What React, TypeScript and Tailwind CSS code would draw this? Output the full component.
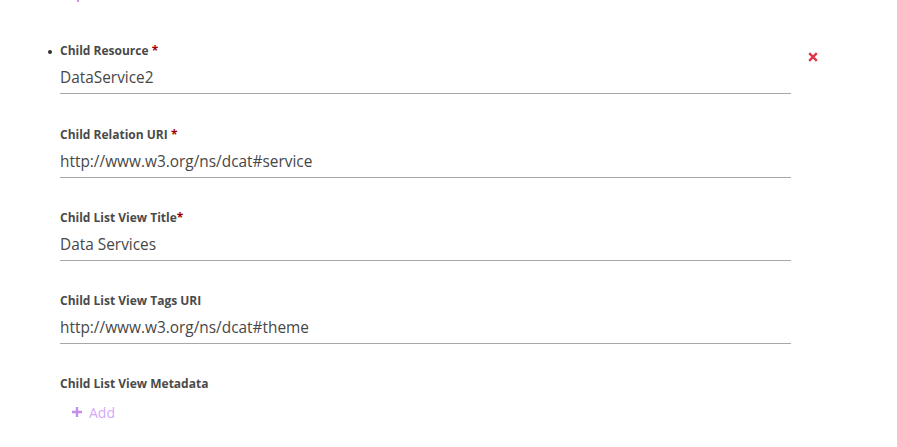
const fields = [
  { label: 'Child Relation URI', required: ' *', value: 'http://www.w3.org/ns/dcat#service', gap: 'mt-[33px]' },
  { label: 'Child List View Title', required: '*', value: 'Data Services', gap: 'mt-[32px]' },
  { label: 'Child List View Tags URI', required: '', value: 'http://www.w3.org/ns/dcat#theme', gap: 'mt-[32px]' },
];

function Field({ label, required, value, gap }: { label: string; required: string; value: string; gap: string }) {
  return (
    <div className={gap}>
      <label className="block text-[12px] leading-[16px] font-bold text-[#4a4a4a]">
        {label}
        {required && <span className="text-[#a00000]">{required}</span>}
      </label>
      <div className="mt-[7px] pb-[3px] border-b border-[#a8a8a8] text-[15.4px] leading-[24px] text-[#474747]">
        {value}
      </div>
    </div>
  );
}

function App() {
  return (
    <div className="w-[897px] h-[447px] bg-white overflow-hidden" style={{ fontFamily: '"Open Sans", "Liberation Sans", sans-serif' }}>
      {/* tail of the control above */}
      <div className="h-[2px] pl-[77px]">
        <div className="w-[2px] h-[2px] bg-[#c993f0]" />
      </div>

      <div className="flex items-start pl-[48px] pt-[41px]">
        <div className="w-1 h-1 mt-[7px] rounded-full bg-[#333]" />
        <div className="ml-[8px] w-[731px]">
          <div>
            <label className="block text-[12px] leading-[16px] font-bold text-[#4a4a4a]">
              Child Resource <span className="text-[#a00000]">*</span>
            </label>
            <div className="mt-[7px] pb-[3px] border-b border-[#a8a8a8] text-[15.4px] leading-[24px] text-[#474747]">
              DataService2
            </div>
          </div>

          {fields.map((f) => (
            <Field key={f.label} {...f} />
          ))}

          <div className="mt-[32px]">
            <label className="block text-[12px] leading-[16px] font-bold text-[#4a4a4a]">
              Child List View Metadata
            </label>
            <button className="mt-[8px] ml-[12px] flex items-center gap-[7px] h-[24px] text-[14px] text-[#d7a9f7]">
              <svg width="10" height="10" viewBox="0 0 10 10" className="text-[#c48ef0]">
                <path d="M5 0v10M0 5h10" stroke="currentColor" strokeWidth="2.4" />
              </svg>
              Add
            </button>
          </div>
        </div>
        <button className="ml-[17px] mt-[9px] text-[#e0344b]">
          <svg width="10" height="10" viewBox="0 0 10 10">
            <path d="M1.2 1.2l7.6 7.6M8.8 1.2l-7.6 7.6" stroke="currentColor" strokeWidth="2.4" />
          </svg>
        </button>
      </div>
    </div>
  );
}

export default App;
